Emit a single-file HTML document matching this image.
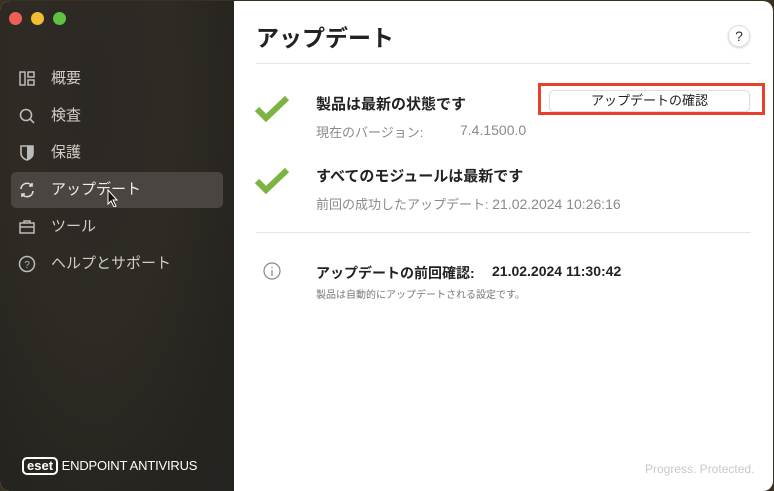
<!DOCTYPE html><html><head><meta charset="utf-8"><style>
*{margin:0;padding:0;box-sizing:border-box}
body{width:774px;height:491px;background:#3a3220;font-family:"Liberation Sans","Noto Sans CJK JP",sans-serif;overflow:hidden;position:relative}
.win{position:absolute;left:0;top:1px;width:773px;height:490px;border-radius:10px;overflow:hidden;background:#fff}
.side{position:absolute;left:0;top:0;width:234px;height:490px;background:radial-gradient(ellipse at 40% 20%,#2c2823 0%,#2f2a24 40%,#26241f 80%,#242320 100%)}
.dot{position:absolute;top:11px;width:13px;height:13px;border-radius:50%}
.nav{position:absolute;left:11px;width:212px;height:36px;color:#d0ccc6;font-size:15px;line-height:36px;padding-left:40px}
.nav svg{position:absolute;left:7px;top:9px}
.sel{background:#4a4540;border-radius:5px;color:#eee}
.main{position:absolute;left:234px;top:0;right:0;bottom:0}
h1{position:absolute;left:22px;top:18px;font-size:23px;font-weight:bold;color:#222}
.help{position:absolute;left:494px;top:24px;width:22px;height:22px;border-radius:50%;border:1px solid #ddd;box-shadow:0 1px 2px #ccc;text-align:center;font-size:14px;line-height:20px;color:#333}
.hr{position:absolute;left:22px;width:495px;height:1px;background:#e6e6e6}
.t{position:absolute;white-space:nowrap}
.b{font-weight:bold;font-size:15px;color:#222}
.g{font-size:13px;color:#8a8a8a}
.btn{position:absolute;left:549px;top:90px;width:201px;height:22px;border:1px solid #ddd;border-radius:5px;font-size:13px;text-align:center;line-height:20px;color:#222;box-shadow:0 1px 1px #e0e0e0;background:#fff}
.red{position:absolute;left:538px;top:83px;width:227px;height:32px;border:3px solid #e8402a}
</style></head><body>
<div class="win">
<div class="side">
<div class="dot" style="left:9px;background:#ed5f56"></div>
<div class="dot" style="left:31px;background:#f4bc33"></div>
<div class="dot" style="left:53px;background:#5ec342"></div>
<div class="nav" style="top:60px"><svg width="18" height="18" viewBox="0 0 18 18" fill="none" stroke="#bbb" stroke-width="1.5"><rect x="2" y="2" width="5" height="13"/><rect x="10" y="2" width="6" height="5"/><rect x="10" y="10" width="6" height="5"/></svg>概要</div>
<div class="nav" style="top:97px"><svg width="18" height="18" viewBox="0 0 18 18" fill="none" stroke="#bbb" stroke-width="1.6"><circle cx="8" cy="8" r="5.5"/><path d="M12 12l4 4"/></svg>検査</div>
<div class="nav" style="top:134px"><svg width="18" height="18" viewBox="0 0 18 18"><path d="M3 2h12v7c0 4-3 6-6 7-3-1-6-3-6-7z" fill="none" stroke="#bbb" stroke-width="1.6"/><path d="M9 2h6v7c0 4-3 6-6 7z" fill="#bbb"/></svg>保護</div>
<div class="nav sel" style="top:171px"><svg width="18" height="18" viewBox="0 0 18 18" fill="none" stroke="#ddd" stroke-width="1.6"><path d="M3 8a6 6 0 0 1 11-3M15 10a6 6 0 0 1-11 3"/><path d="M14 2v3h-3M4 16v-3h3"/></svg>アップデート
<svg style="left:96px;top:17px" width="12" height="18" viewBox="0 0 12 18"><path d="M1 1v14l3-3 3 6 2-1-3-6h4z" fill="#111" stroke="#fff" stroke-width="1"/></svg></div>
<div class="nav" style="top:208px"><svg width="18" height="18" viewBox="0 0 18 18" fill="none" stroke="#bbb" stroke-width="1.5"><rect x="2" y="5" width="14" height="10"/><path d="M6 5V3h6v2M2 9h14"/></svg>ツール</div>
<div class="nav" style="top:245px"><svg width="18" height="18" viewBox="0 0 18 18" fill="none" stroke="#bbb" stroke-width="1.5"><circle cx="9" cy="9" r="7.5"/><text x="9" y="13" font-size="10" text-anchor="middle" fill="#bbb" stroke="none" font-family="Liberation Sans">?</text></svg>ヘルプとサポート</div>
<div class="t" style="left:22px;top:456px;color:#fff;font-size:13px"><span style="display:inline-block;border:2px solid #fff;border-radius:5px;padding:0 3px;font-weight:bold;font-size:13px;line-height:14px;letter-spacing:0">eset</span> <span style="letter-spacing:-0.2px">ENDPOINT ANTIVIRUS</span></div>
</div>
<div class="main">
<h1>アップデート</h1>
<div class="help">?</div>
<div class="hr" style="top:62px"></div>
<svg class="t" style="left:20px;top:94px" width="36" height="28" viewBox="0 0 36 28"><path d="M3 14l9 9L33 3" fill="none" stroke="#7cb342" stroke-width="6"/></svg>
<div class="t b" style="left:82px;top:92px">製品は最新の状態です</div>
<div class="t g" style="left:82px;top:121px">現在のバージョン:</div>
<div class="t g" style="left:226px;top:121px;font-size:14px">7.4.1500.0</div>
<svg class="t" style="left:20px;top:166px" width="36" height="28" viewBox="0 0 36 28"><path d="M3 14l9 9L33 3" fill="none" stroke="#7cb342" stroke-width="6"/></svg>
<div class="t b" style="left:82px;top:164px">すべてのモジュールは最新です</div>
<div class="t g" style="left:82px;top:193px">前回の成功したアップデート: <span style="font-size:14px">21.02.2024 10:26:16</span></div>
<div class="hr" style="top:231px"></div>
<svg class="t" style="left:29px;top:261px" width="18" height="18" viewBox="0 0 18 18" fill="none" stroke="#888" stroke-width="1.2"><circle cx="9" cy="9" r="8"/><path d="M9 8v6M9 5v1.2"/></svg>
<div class="t b" style="left:82px;top:262px;font-size:14px">アップデートの前回確認:</div>
<div class="t b" style="left:258px;top:262px;font-size:14px">21.02.2024 11:30:42</div>
<div class="t" style="left:82px;top:285px;font-size:10px;color:#777">製品は自動的にアップデートされる設定です。</div>
<div class="t" style="left:411px;top:461px;font-size:12px;color:#c8c8c8">Progress. Protected.</div>
</div>
</div>
<div class="btn">アップデートの確認</div>
<div class="red"></div>
</body></html>
